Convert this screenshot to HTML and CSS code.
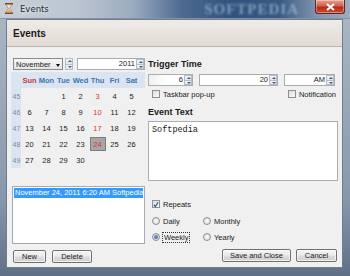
FILE: index.html
```html
<!DOCTYPE html>
<html>
<head>
<meta charset="utf-8">
<link rel="stylesheet" href="styles.css">
</head>
<body>
<div class="window">
  <div class="titlebar">
    <svg class="appicon" width="8" height="11" viewBox="0 0 8 11">
      <rect x="0" y="0" width="8" height="1.6" fill="#7a4a20"/>
      <rect x="0" y="9.4" width="8" height="1.6" fill="#7a4a20"/>
      <path d="M1.2 1.6 H6.8 L4.6 5.5 L6.8 9.4 H1.2 L3.4 5.5 Z" fill="#f4ead8" stroke="#9b6a3a" stroke-width="0.6"/>
      <path d="M2.2 8.8 H5.8 L4 6.6 Z" fill="#e0a040"/>
    </svg>
    <span class="title">Events</span>
    <span class="watermark">SOFTPEDIA</span>
    <div class="close">
      <svg width="9" height="8" viewBox="0 0 9 8"><path d="M1 1 L8 7 M8 1 L1 7" stroke="#fff" stroke-width="2"/></svg>
    </div>
  </div>
  <div class="frame">
    <div class="client">
      <div class="header">Events</div>
      <div class="body">
        <div class="left">
          <div class="navrow">
            <div class="combo"><span>November</span><span class="arrow"></span></div>
            <div class="spin solo"><span class="up"></span><span class="down"></span></div>
            <div class="yearbox"><span class="val">2011</span><div class="spin"><span class="up"></span><span class="down"></span></div></div>
          </div>
          <div class="calendar">
            <div class="wk hd"></div>
            <div class="dn sun">Sun</div><div class="dn">Mon</div><div class="dn">Tue</div><div class="dn">Wed</div><div class="dn">Thu</div><div class="dn">Fri</div><div class="dn">Sat</div><div class="hd fill"></div>

            <div class="wk">45</div><div></div><div></div><div class="d">1</div><div class="d">2</div><div class="d red">3</div><div class="d">4</div><div class="d">5</div><div></div>
            <div class="wk">46</div><div class="d">6</div><div class="d">7</div><div class="d">8</div><div class="d">9</div><div class="d red">10</div><div class="d">11</div><div class="d">12</div><div></div>
            <div class="wk">47</div><div class="d">13</div><div class="d">14</div><div class="d">15</div><div class="d">16</div><div class="d red">17</div><div class="d">18</div><div class="d">19</div><div></div>
            <div class="wk">48</div><div class="d">20</div><div class="d">21</div><div class="d">22</div><div class="d">23</div><div class="d red sel"><span>24</span></div><div class="d">25</div><div class="d">26</div><div></div>
            <div class="wk">49</div><div class="d">27</div><div class="d">28</div><div class="d">29</div><div class="d">30</div><div></div><div></div><div></div><div></div>
          </div>
          <div class="list">
            <div class="item">November 24, 2011 6:20 AM Softpedia</div>
          </div>
          <div class="btnrow">
            <div class="btn w-new">New</div>
            <div class="btn w-del">Delete</div>
          </div>
        </div>
        <div class="right">
          <div class="label">Trigger Time</div>
          <div class="timerow">
            <div class="field hour"><span class="val">6</span><div class="spin"><span class="up"></span><span class="down"></span></div></div>
            <div class="field minute"><span class="val">20</span><div class="spin"><span class="up"></span><span class="down"></span></div></div>
            <div class="field ampm"><span class="val">AM</span><div class="spin"><span class="up"></span><span class="down"></span></div></div>
          </div>
          <div class="checkrow">
            <div class="opt"><span class="cb"></span>Taskbar pop-up</div>
            <div class="opt notif"><span class="cb"></span>Notification</div>
          </div>
          <div class="label evt">Event Text</div>
          <div class="textarea">Softpedia</div>
          <div class="opt repeats"><span class="cb checked"><svg width="7" height="7" viewBox="0 0 7 7"><path d="M1 3.8 L2.8 5.8 L6 0.8" fill="none" stroke="#2a4f8f" stroke-width="1.3"/></svg></span>Repeats</div>
          <div class="radios">
            <div class="opt"><span class="rb"></span>Daily</div>
            <div class="opt"><span class="rb"></span>Monthly</div>
            <div class="opt"><span class="rb on"></span><span class="focus">Weekly</span></div>
            <div class="opt"><span class="rb"></span>Yearly</div>
          </div>
          <div class="btnrow end">
            <div class="btn w-save">Save and Close</div>
            <div class="btn w-cancel">Cancel</div>
          </div>
        </div>
      </div>
    </div>
  </div>
</div>
</body>
</html>
```
FILE: styles.css
```css
* { box-sizing: border-box; }
html, body { margin: 0; padding: 0; }
body {
  width: 350px; height: 276px; overflow: hidden;
  font-family: "Liberation Sans", Arial, sans-serif;
  font-size: 7.5px; color: #1a1a1a;
  background: #5a6d85;
}
.window { width: 350px; height: 276px; display: flex; flex-direction: column; }

.titlebar {
  height: 19px; flex: none; display: flex; align-items: center;
  padding-left: 5px;
  background: linear-gradient(to right, #c6ced7 0%, #bcc6d1 22%, #9aabbf 38%, #4d6a90 52%, #31527d 66%, #3a5a83 80%, #7e93ad 90%, #9eadbf 100%);
  border-bottom: 1px solid #8492a4;
}
.appicon { flex: none; margin-top: -1px; }
.title { margin-left: 7px; font-family: "DejaVu Sans", sans-serif; font-size: 8.5px; color: #1e2a36; text-shadow: 0 0 4px rgba(255,255,255,0.9); }
.watermark {
  margin-left: auto; margin-right: 16px;
  font-family: "Liberation Serif", serif; font-weight: bold; font-size: 15px; letter-spacing: 1px;
  color: rgba(190,210,235,0.55); filter: blur(1px);
}
.close {
  width: 30px; height: 14px; margin-right: 5px; align-self: flex-start;
  display: flex; align-items: center; justify-content: center;
  background: linear-gradient(#e8a090 0%, #d06050 45%, #b82a18 55%, #cc4a30 100%);
  border: 1px solid #5a2a24; border-top: none;
  border-radius: 0 0 3px 3px;
  box-shadow: inset 0 0 0 1px rgba(255,255,255,0.35);
}

.frame {
  flex: 1; display: flex;
  padding: 0 7px 8px 6px;
  background: linear-gradient(#a9b5c3, #8898ab 70%, #5f6f85);
}
.client {
  flex: 1; display: flex; flex-direction: column;
  background: #f0f0f0;
  border: 1px solid #6e7d8f;
}
.header {
  height: 27px; flex: none;
  padding-left: 6px; display: flex; align-items: center;
  font-weight: bold; font-size: 10px; color: #1a1a1a;
  background: linear-gradient(#efebe7, #e2dbd5);
  border-bottom: 1px solid #bdb6ae;
  padding-top: 1px;
}
.body { flex: 1; display: flex; padding: 11px 3px 0 5px; gap: 3px; }

/* left column */
.left { width: 133px; display: flex; flex-direction: column; }
.navrow { height: 12px; display: flex; align-items: stretch; margin-left: 1px; }
.combo {
  width: 50px; border: 1px solid #8a8a8a; background: linear-gradient(#f6f6f6, #e4e4e4);
  display: flex; align-items: center; padding-left: 2px; justify-content: space-between;
}
.combo .arrow { width: 0; height: 0; border-left: 2.5px solid transparent; border-right: 2.5px solid transparent; border-top: 3px solid #000; margin-right: 2px; margin-top: 2px; }
.spin { width: 8px; display: flex; flex-direction: column; flex: none; }
.spin span {
  flex: 1; position: relative; background: linear-gradient(#f2f5f9, #dde4ec);
  border: 1px solid #b4bdc8;
}
.spin .down { border-top: none; }
.spin span::after {
  content: ""; position: absolute; left: 1.5px; top: 1px;
  border-left: 2px solid transparent; border-right: 2px solid transparent;
}
.spin .up::after { border-bottom: 2px solid #4a5a6e; }
.spin .down::after { border-top: 2px solid #4a5a6e; top: 1px; }
.spin.solo { margin-left: 2px; }
.yearbox {
  margin-left: 4px; width: 68px; display: flex; background: #fff;
  border: 1px solid #abadb3;
}
.val { flex: 1; text-align: right; padding-right: 1px; line-height: 10px; }

.calendar {
  margin-top: 2px; margin-left: -1px; width: 134px;
  display: grid; grid-template-columns: 10px repeat(7, 17px) 1fr;
  grid-template-rows: 16px repeat(5, 16px);
  align-items: center;
}
.calendar > div { height: 16px; display: flex; align-items: center; justify-content: center; }
.hd, .dn { background: #dbe5f1; }
.dn { font-weight: bold; color: #3c76b2; font-size: 7.5px; }
.dn.sun { color: #c8383e; }
.wk { background: #dbe5f1; color: #7b8795; font-size: 7px; padding-left: 1px; }
.d { color: #1a1a1a; font-size: 7.5px; }
.d.red { color: #e8302a; }
.d.sel span {
  width: 16px; height: 14px; display: flex; align-items: center; justify-content: center;
  background: #a6a6a6; border: 1px solid #7d7d7d;
}

.list {
  margin-top: 18px; height: 58px; background: #fff;
  border: 1px solid #a5a9b0; padding: 1px;
}
.item { background: #3399ff; color: #fff; height: 10px; line-height: 10px; padding-left: 1px; white-space: nowrap; overflow: hidden; }

.btnrow { display: flex; gap: 6px; margin-top: 6px; }
.btnrow.end { justify-content: flex-end; gap: 5px; margin-top: 7px; margin-right: 1px; }
.btn {
  height: 13px; display: flex; align-items: center; justify-content: center;
  border: 1px solid #707070; border-radius: 2px;
  background: linear-gradient(#f3f3f3 0%, #ebebeb 48%, #dddddd 52%, #cfcfcf 100%);
  box-shadow: inset 0 0 0 1px rgba(255,255,255,0.7);
  color: #1a1a1a;
}
.w-new { width: 33px; margin-left: 1px; }
.w-del { width: 40px; }
.w-save { width: 69px; }
.w-cancel { width: 41px; }

/* right column */
.right { width: 190px; display: flex; flex-direction: column; }
.label { font-weight: bold; font-size: 9px; line-height: 12px; height: 12px; color: #1a1a1a; }
.timerow { display: flex; gap: 6px; margin-top: 4px; height: 12px; }
.field { display: flex; background: #fff; border: 1px solid #abadb3; }
.hour { width: 45px; background: linear-gradient(to right, #f0f0f0, #fff 40%); }
.minute { width: 79px; }
.ampm { width: 51px; }
.checkrow { display: flex; justify-content: space-between; margin-top: 3px; height: 10px; padding-left: 4px; padding-right: 0; }
.notif { margin-right: 2px; }
.opt { display: flex; align-items: center; gap: 3px; height: 10px; white-space: nowrap; }
.cb {
  width: 8px; height: 8px; flex: none; border: 1px solid #8e8f8f;
  background: linear-gradient(135deg, #dcdcdc, #fafafa);
  display: flex; align-items: center; justify-content: center;
}
.label.evt { margin-top: 7px; }
.textarea {
  margin-top: 3px; height: 60px; background: #fff; border: 1px solid #abadb3;
  font-family: "Liberation Mono", monospace; font-size: 8.5px; padding: 3px 3px; color: #222;
  line-height: 10px;
}
.repeats { margin-top: 18px; padding-left: 4px; }
.radios {
  display: grid; grid-template-columns: 51px 1fr; row-gap: 6px;
  margin-top: 7px; padding-left: 4px;
}
.rb {
  width: 8px; height: 8px; border-radius: 50%; flex: none;
  border: 1px solid #8e8f8f; background: radial-gradient(#fafafa, #d8d8d8);
  display: flex; align-items: center; justify-content: center;
}
.rb.on::after { content: ""; width: 4px; height: 4px; border-radius: 50%; background: radial-gradient(circle at 40% 40%, #6fa0e0, #1e4e96); }
.focus { outline: 1px dotted #333; outline-offset: 0; padding: 0 1px; }
```
